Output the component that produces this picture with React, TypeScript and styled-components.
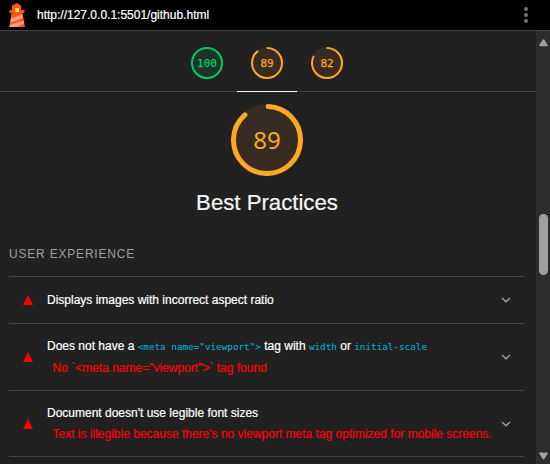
import React from 'react';
import styled, { createGlobalStyle } from 'styled-components';

const Global = createGlobalStyle`
  * { box-sizing: border-box; }
  body { margin: 0; background: #212121; }
`;

const Page = styled.div`
  width: 550px;
  height: 464px;
  overflow: hidden;
  display: flex;
  flex-direction: column;
  background: #212121;
  color: #fff;
  font-family: 'Liberation Sans', Arial, sans-serif;
  font-size: 12px;
`;

const TopBar = styled.header`
  height: 31px;
  flex: none;
  display: flex;
  align-items: center;
  justify-content: space-between;
  padding: 0 21px 0 8px;
  background: #000;
  border-bottom: 1px solid #424242;
`;

const Brand = styled.div`
  display: flex;
  align-items: center;
  gap: 11px;
`;

const Text = styled.span`
  white-space: pre;
  -webkit-text-stroke: 0.2px currentColor;
`;

const Body = styled.div`
  flex: 1;
  min-height: 0;
  display: flex;
`;

const Report = styled.main`
  width: 536px;
  overflow: hidden;
`;

const Tabs = styled.nav`
  height: 61px;
  display: flex;
  justify-content: center;
  padding-right: 2px;
  border-bottom: 1px solid #424242;
`;

const Tab = styled.div<{ $active?: boolean }>`
  width: 60px;
  height: 61px;
  display: flex;
  justify-content: center;
  padding-top: 16px;
  border-bottom: 1px solid ${(p) => (p.$active ? '#fff' : '#424242')};
`;

const GaugeBox = styled.div<{ $size: number; $color: string; $large?: boolean }>`
  width: ${(p) => p.$size}px;
  height: ${(p) => p.$size}px;
  display: grid;
  place-items: center;
  color: ${(p) => p.$color};
  font-family: ${(p) => (p.$large ? "'Noto Sans', sans-serif" : "'DejaVu Sans Mono', monospace")};
  font-size: ${(p) => (p.$large ? 24 : 11)}px;
  line-height: 1;
  -webkit-text-stroke: ${(p) => (p.$large ? 0 : 0.25)}px currentColor;
  > * { grid-area: 1 / 1; }
`;

const Hero = styled.section`
  height: 145px;
  padding: 12px 2px 0 0;
  display: flex;
  flex-direction: column;
  align-items: center;
`;

const Title = styled.h1`
  margin: 12px 0 0;
  font-size: 22.2px;
  line-height: 30px;
  font-weight: 400;
  color: #f5f5f5;
  -webkit-text-stroke: 0.2px currentColor;
`;

const Section = styled.section`
  padding: 0 12px 0 9px;
`;

const Heading = styled.h2`
  height: 39px;
  margin: 0;
  padding-top: 9px;
  font-size: 12px;
  line-height: 16px;
  font-weight: 400;
  letter-spacing: 0.8px;
  color: #9e9e9e;
`;

const Audit = styled.article<{ $height: number }>`
  height: ${(p) => p.$height}px;
  display: flex;
  align-items: center;
  border-top: 1px solid #424242;
  padding: 0 13px 0 14px;
`;

const AuditText = styled.div`
  flex: 1;
  padding-left: 14px;
  white-space: nowrap;
`;

const Line = styled.div`
  height: 22px;
  line-height: 22px;
`;

const Detail = styled(Line)<{ $tight?: boolean }>`
  padding-left: 5.500px;
  line-height: ${(p) => (p.$tight ? 20 : 22)}px;
  color: #f00;
`;

const Code = styled.code`
  font-family: 'DejaVu Sans Mono', monospace;
  font-size: 9.3px;
  color: #00b8d4;
`;

const Rail = styled.aside`
  width: 14px;
  display: flex;
  flex-direction: column;
  align-items: center;
  padding: 8px 0 4px 1px;
  background: #2c2c2c;
`;

const Thumb = styled.div`
  width: 9px;
  height: 61px;
  margin: 167px 0 auto;
  border-radius: 5px;
  background: #9f9f9f;
`;

function Gauge({ value, size, stroke, color, fill, large }: {
  value: number; size: number; stroke: number; color: string; fill: string; large?: boolean;
}) {
  const r = size / 2 - stroke / 2;
  const c = 2 * Math.PI * r;
  const arc = value === 100 ? c : (value / 100) * c - stroke / 2;
  return (
    <GaugeBox $size={size} $color={color} $large={large}>
      <svg width={size} height={size} viewBox={`0 0 ${size} ${size}`}>
        <circle cx={size / 2} cy={size / 2} r={size / 2} fill={fill} />
        <circle cx={size / 2} cy={size / 2} r={r} fill="none" stroke={color} strokeWidth={stroke}
          strokeLinecap="round" strokeDasharray={`${arc} ${c}`}
          transform={`rotate(-88 ${size / 2} ${size / 2})`} />
      </svg>
      <span>{value}</span>
    </GaugeBox>
  );
}

const Lighthouse = () => (
  <svg width="18" height="25" viewBox="0 0 18 25">
    <path d="M8.800 0 13 2.500V7h3.500v3H14.500L17 24H1.500L3.500 10H1.500V7H4V2.500z" fill="#ff5316" />
    <path d="M3 15.500 14.300 11.500l.7 3.500L2.200 20zM1.800 22l13.800-4.500.6 3L9 24H1.500z" fill="#ff9f80" />
    <path d="M7 5h4v4H7z" fill="#ffe23d" />
  </svg>
);

const Dots = () => (
  <svg width="6" height="18" viewBox="0 0 6 18" fill="#757575">
    <circle cx="3" cy="3" r="2" /><circle cx="3" cy="9" r="2" /><circle cx="3" cy="15" r="2" />
  </svg>
);

const Warning = () => (
  <svg width="10" height="10" viewBox="0 0 10 10"><path d="M5 0 10 10H0z" fill="#f00" /></svg>
);

const Chevron = () => (
  <svg width="10" height="6" viewBox="0 0 10 6">
    <path d="M1 1l4 3.700L9 1" fill="none" stroke="#9e9e9e" strokeWidth="1.500" />
  </svg>
);

const Arrow = ({ down }: { down?: boolean }) => (
  <svg width="9" height="8" viewBox="0 0 9 8">
    <path
      d={down ? 'M.7.500h7.600Q9 .500 8.800 1.500L5.500 6.800Q4.500 8 3.500 6.800L.2 1.500Q0 .500.7.500z' : 'M.7 7.200h7.600Q9 7.200 8.800 6.200L5.500 1Q4.500-.3 3.500 1L.2 6.200Q0 7.200.7 7.200z'}
      fill="#9f9f9f"
    />
  </svg>
);

const orange = { color: '#ffa726', fill: '#372c21' };

export default function App() {
  return (
    <Page>
      <Global />
      <TopBar>
        <Brand>
          <Lighthouse />
          <Text>http://127.0.0.1:5501/github.html</Text>
        </Brand>
        <Dots />
      </TopBar>
      <Body>
        <Report>
          <Tabs>
            <Tab><Gauge value={100} size={32} stroke={2} color="#00cc66" fill="#1e3328" /></Tab>
            <Tab $active><Gauge value={89} size={32} stroke={2} {...orange} /></Tab>
            <Tab><Gauge value={82} size={32} stroke={2} {...orange} /></Tab>
          </Tabs>
          <Hero>
            <Gauge value={89} size={72} stroke={5} large {...orange} />
            <Title>Best Practices</Title>
          </Hero>
          <Section>
            <Heading>USER EXPERIENCE</Heading>
            <Audit $height={47}>
              <Warning />
              <AuditText><Line><Text>Displays images with incorrect aspect ratio</Text></Line></AuditText>
              <Chevron />
            </Audit>
            <Audit $height={67}>
              <Warning />
              <AuditText>
                <Line>
                  <Text>Does not have a </Text><Code>{'<meta name="viewport">'}</Code>
                  <Text> tag with </Text><Code>width</Code><Text> or </Text><Code>initial-scale</Code>
                </Line>
                <Detail><Text>{'No `<meta name="viewport">` tag found'}</Text></Detail>
              </AuditText>
              <Chevron />
            </Audit>
            <Audit $height={66}>
              <Warning />
              <AuditText>
                <Line><Text>Document doesn't use legible font sizes</Text></Line>
                <Detail $tight><Text>Text is illegible because there's no viewport meta tag optimized for mobile screens.</Text></Detail>
              </AuditText>
              <Chevron />
            </Audit>
            <Audit $height={30} />
          </Section>
        </Report>
        <Rail>
          <Arrow />
          <Thumb />
          <Arrow down />
        </Rail>
      </Body>
    </Page>
  );
}
